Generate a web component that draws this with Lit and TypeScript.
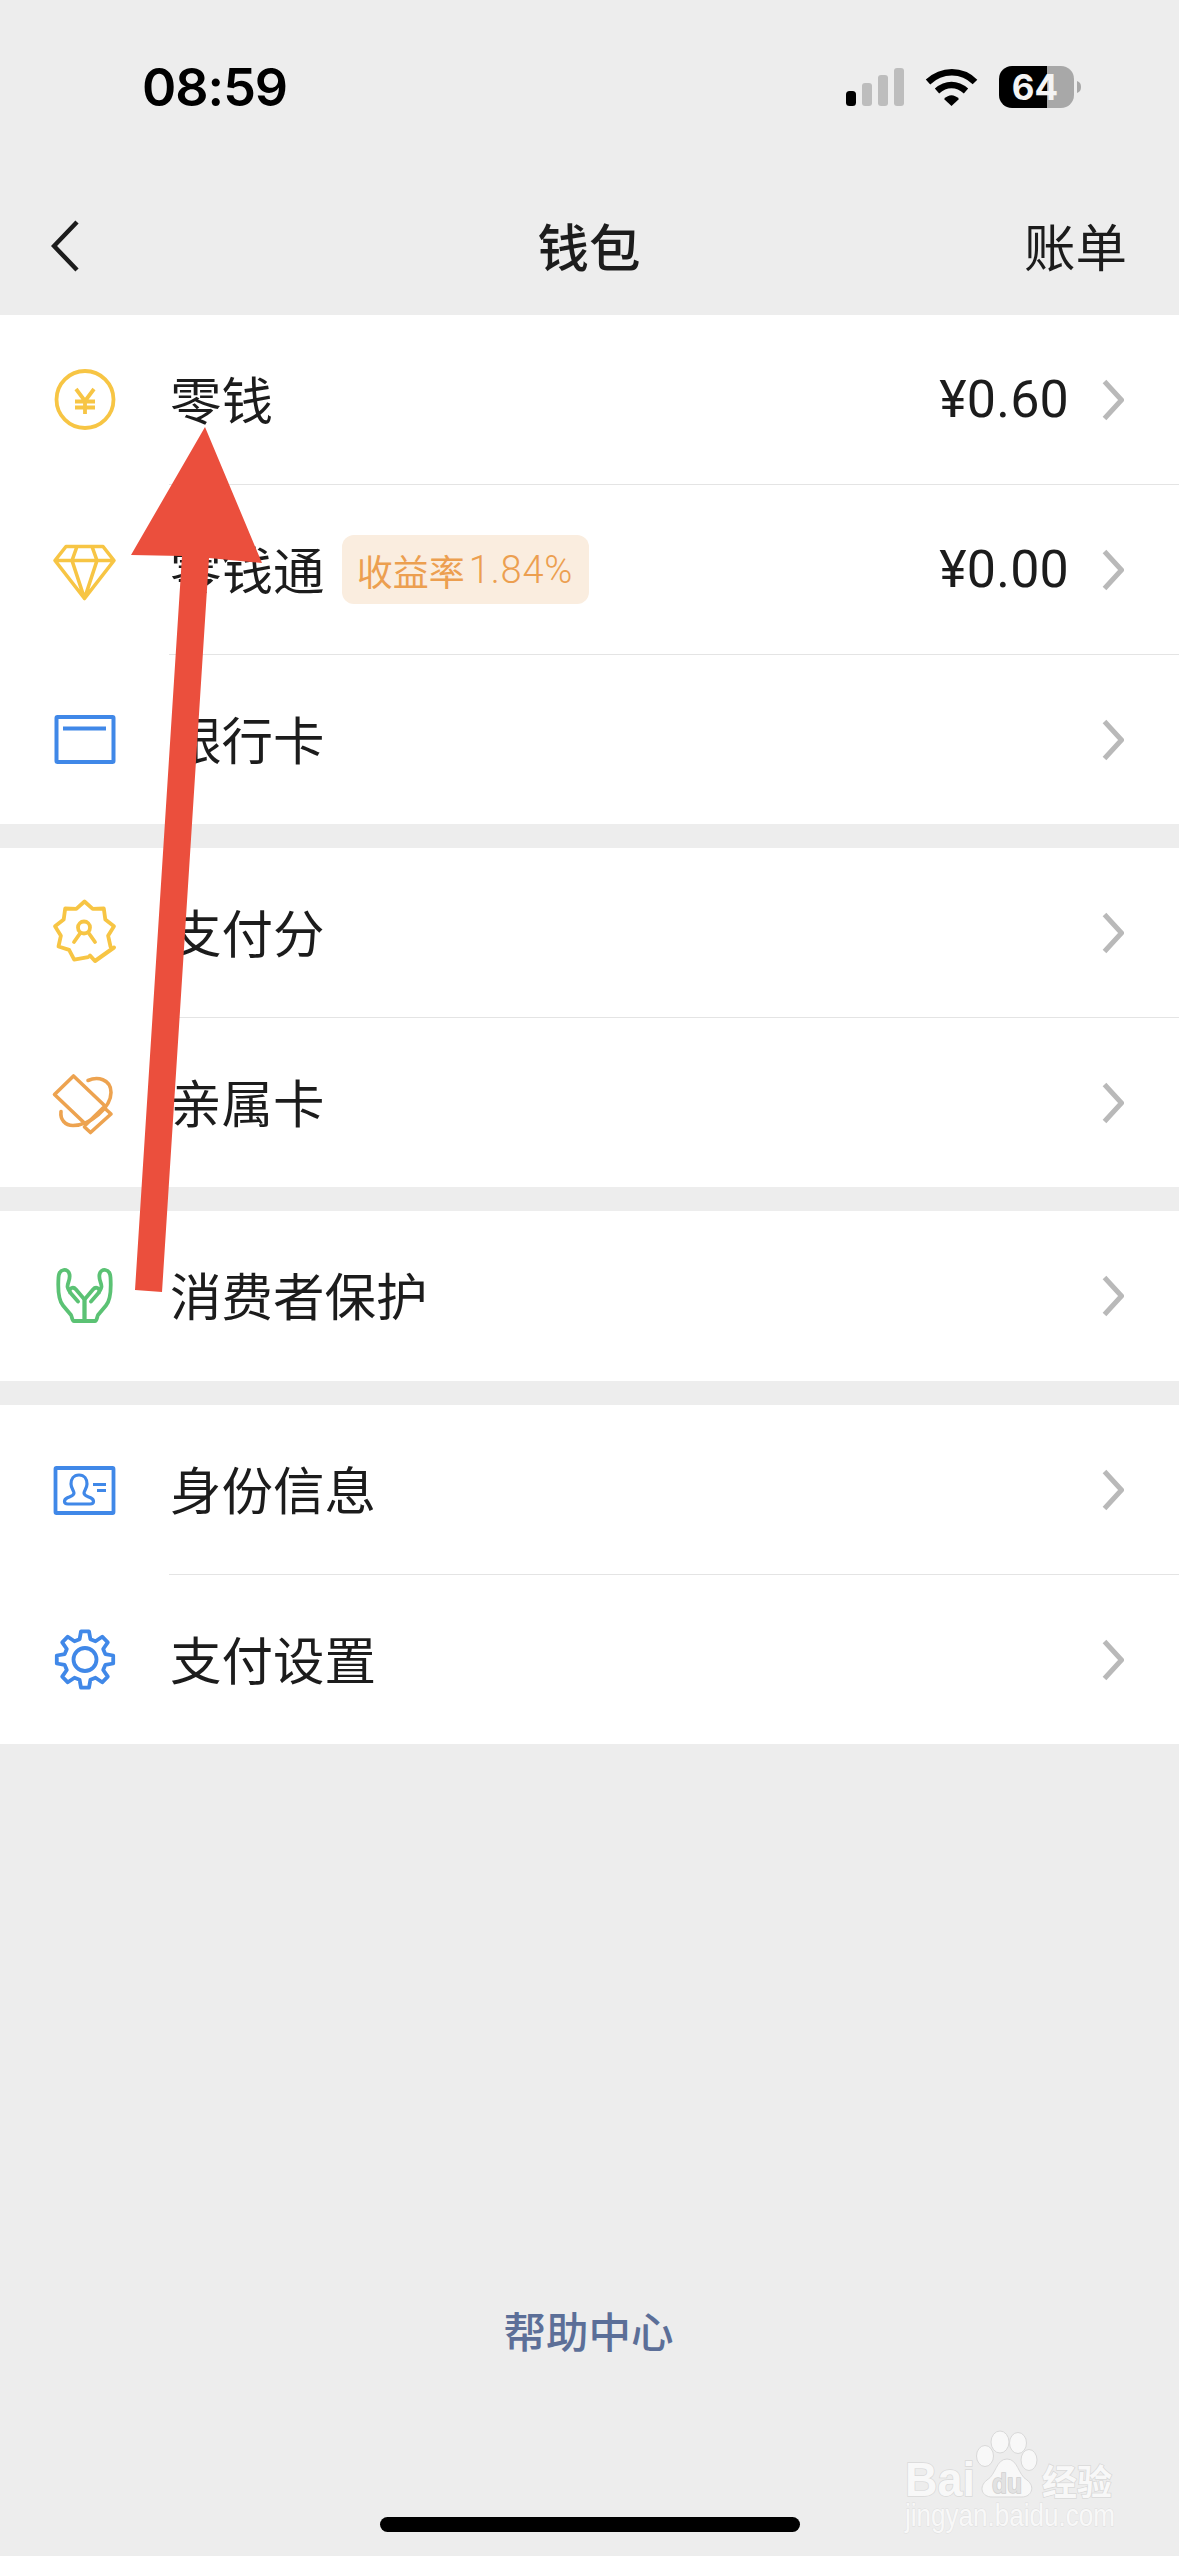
import { LitElement, html, css } from "lit";
import { customElement } from "lit/decorators.js";

function starPath(): string {
  const cx = 39.5, cy = 36, R = 30, r = 24;
  const pts: string[] = [];
  const P = (a: number, rad: number) => {
    const t = (a * Math.PI) / 180;
    return `${(cx + rad * Math.sin(t)).toFixed(1)} ${(cy - rad * Math.cos(t)).toFixed(1)}`;
  };
  pts.push(P(172, 26));
  for (let a = 200; a <= 480; a += 20) {
    const outer = Math.round(a / 20) % 2 === 0;
    pts.push(P(a, outer ? R : r));
  }
  return "M" + pts.join("L");
}

function gearPath(): string {
  const cx = 40, cy = 39.5, Ro = 28.5, Ri = 21;
  const pts: string[] = [];
  const P = (a: number, rad: number) => {
    const t = (a * Math.PI) / 180;
    return `${(cx + rad * Math.sin(t)).toFixed(1)} ${(cy - rad * Math.cos(t)).toFixed(1)}`;
  };
  for (let k = 0; k < 8; k++) {
    const a = k * 45;
    pts.push(P(a - 15, Ri), P(a - 8, Ro), P(a + 8, Ro), P(a + 15, Ri));
  }
  return "M" + pts.join("L") + "Z";
}

const YEL = "#f7c544";
const BLUE = "#4088e8";
const ORG = "#eda350";
const GRN = "#5bc274";

const icons = {
  coin: html`<svg class="ic" viewBox="0 0 80 80" fill="none" stroke=${YEL} stroke-width="3.8"><circle cx="40" cy="39.5" r="28.5"/><path d="M31 29l9 12 9-12M30 41.5h20M30 47.5h20M40 41v13"/></svg>`,
  diamond: html`<svg class="ic" viewBox="0 -5.5 80 80" fill="none" stroke=${YEL} stroke-width="3.600" stroke-linejoin="round"><path d="M21 11h37l11 14-29.500 38L10 25zM10 25h59M32 11l-5 14 12.500 38L52 25l-5-14"/></svg>`,
  bank: html`<svg class="ic" viewBox="0 0 80 80" fill="none" stroke=${BLUE} stroke-width="4"><rect x="11.500" y="17" width="57" height="45" rx="1"/><path d="M18 28.500h43"/></svg>`,
  badge: html`<svg class="ic" viewBox="0 -2.500 80 80" fill="none" stroke=${YEL} stroke-width="3.800" stroke-linejoin="round" stroke-linecap="round"><path d=${starPath()}/><circle cx="39" cy="32" r="6"/><path d="M35 38l-6 8.500M44 38l6 8.500"/><path d="M45 60l5 5.500L69 52" stroke-width="4"/></svg>`,
  family: html`<svg class="ic" viewBox="0 -2.500 80 80" fill="none" stroke=${ORG} stroke-width="3.600" stroke-linejoin="round" stroke-linecap="round"><path d="M28.500 10.500L9.500 29 41 59l19-18.500zM60 43l6 5.500L45.500 67l-6-5.500"/><path d="M43 15C52 11 66 13 66 27 66 42 45 60 28 60 20 60 15 54 16 46"/></svg>`,
  hands: html`<svg class="ic" viewBox="0 0.500 80 80" fill="none" stroke=${GRN} stroke-width="3.800" stroke-linejoin="round" stroke-linecap="round"><path d="M39.500 44V65.500H29C27 65.500 27 61 26 59.500L18 50C13 44 13 30 13.500 22 14 13 23 12 24.500 19 25.500 24 22.500 27 22.500 31 22.500 33 24 35 26 38L33 46M39.500 44L31 34C28 30.500 23.500 33 25 37"/><path d="M39.500 44V65.500H50C52 65.500 52 61 53 59.500L61 50C66 44 66 30 65.500 22 65 13 56 12 54.500 19 53.500 24 56.500 27 56.500 31 56.500 33 55 35 53 38L46 46M39.500 44L48 34C51 30.500 55.500 33 54 37"/></svg>`,
  id: html`<svg class="ic" viewBox="0 0 80 80" fill="none" stroke=${BLUE} stroke-width="3.800" stroke-linejoin="round"><rect x="10.500" y="18" width="58" height="45" rx="1"/><path d="M34 25C28.500 25 26 29.500 26 34 26 38 29 41 29 43 29 46 25 46.500 22 48 19 49.500 18 54 23 54H45C50 54 49 49.500 46 48 43 46.500 39 46 39 43 39 41 42 38 42 34 42 29.500 39.500 25 34 25Z" stroke-width="3.200"/><path d="M48 34.500h13M52 40.500h9" stroke-width="3.200"/></svg>`,
  gear: html`<svg class="ic" viewBox="0 0 80 80" fill="none" stroke=${BLUE} stroke-width="3.800" stroke-linejoin="round"><path d=${gearPath()}/><circle cx="40" cy="39.500" r="11.500"/></svg>`,
};

type Row = { icon: keyof typeof icons; label: string; amount?: string; tag?: string };

const groups: Row[][] = [
  [
    { icon: "coin", label: "零钱", amount: "¥0.60" },
    { icon: "diamond", label: "零钱通", amount: "¥0.00", tag: "收益率 1.84%" },
    { icon: "bank", label: "银行卡" },
  ],
  [
    { icon: "badge", label: "支付分" },
    { icon: "family", label: "亲属卡" },
  ],
  [{ icon: "hands", label: "消费者保护" }],
  [
    { icon: "id", label: "身份信息" },
    { icon: "gear", label: "支付设置" },
  ],
];

@customElement("app-root")
export class AppRoot extends LitElement {
  static styles = css`
    :host {
      display: block;
      width: 1179px;
      height: 2556px;
      position: relative;
      overflow: hidden;
      background: #ededed;
      font-family: "Noto Sans CJK SC", "Noto Sans", sans-serif;
      color: #1c1c1c;
    }
    .page {
      height: 100%;
      display: flex;
      flex-direction: column;
    }
    .status {
      height: 172px;
      box-sizing: border-box;
      padding: 59px 98px 0 142px;
      display: flex;
      justify-content: space-between;
      align-items: flex-start;
      color: #000;
    }
    .time {
      font: 600 52px/58px Inter, "Liberation Sans", sans-serif;
      letter-spacing: -1px;
    }
    .sys {
      display: flex;
      align-items: center;
      margin-top: 7px;
    }
    .batt {
      display: block;
      margin-left: 13px;
    }
    .signal {
      display: block;
    }
    .nav {
      height: 143px;
      box-sizing: border-box;
      padding: 3px 52px 0 51px;
      display: grid;
      grid-template-columns: 1fr auto 1fr;
      align-items: center;
    }
    .back {
      display: block;
      width: 28px;
      height: 52px;
      margin-top: 2px;
    }
    .title {
      font-size: 51.500px;
      line-height: 60px;
      font-weight: 500;
    }
    .bill {
      font-size: 51.500px;
      line-height: 60px;
      justify-self: end;
    }
    .group {
      background: #fff;
      margin-bottom: 24px;
    }
    .group:last-of-type {
      margin-bottom: 0;
    }
    .row {
      height: 169px;
      display: flex;
      align-items: center;
      padding-left: 45px;
      padding-right: 55px;
    }
    .group.single .row {
      height: 170px;
    }
    .ic {
      width: 80px;
      height: 80px;
      flex: none;
    }
    .label {
      margin-left: 45px;
      margin-bottom: 4px;
      font-size: 51.500px;
      line-height: 60px;
    }
    .tag {
      margin-left: 17px;
      width: 247px;
      height: 69px;
      border-radius: 12px;
      background: #faeddf;
      color: #ec9f50;
      font-size: 36px;
      display: flex;
      align-items: center;
      justify-content: center;
      white-space: nowrap;
    }
    .tag b {
      font: 300 38px Roboto, sans-serif;
      letter-spacing: 0.8px;
      margin-left: 4px;
    }
    .amount {
      margin-left: auto;
      font: 400 52px/60px Roboto, sans-serif;
      letter-spacing: 0.2px;
    }
    .chev {
      display: block;
      width: 22px;
      height: 42px;
      margin-left: auto;
      flex: none;
    }
    .amount + .chev {
      margin-left: 33px;
    }
    .sep {
      height: 1px;
      background: #e4e4e4;
      margin-left: 169px;
    }
    .footer {
      margin-top: auto;
      display: flex;
      flex-direction: column;
      align-items: center;
      padding-bottom: 24px;
    }
    .help {
      font-size: 42.500px;
      line-height: 60px;
      color: #5c6f98;
      font-weight: 500;
      margin-bottom: 4px;
      margin-right: 2px;
    }
    .home {
      margin-top: 153px;
      width: 420px;
      height: 15px;
      border-radius: 8px;
      background: #000;
    }
    .arrow {
      position: absolute;
      inset: 0;
      width: 1179px;
      height: 2556px;
      pointer-events: none;
    }
    .wm {
      position: absolute;
      left: 900px;
      top: 2425px;
      width: 225px;
      height: 115px;
    }
    .wm text {
      fill: #f8f8f8;
      stroke: #d9d9d9;
      stroke-width: 1.500px;
      paint-order: stroke;
    }
    .wm .baidu {
      font: 700 48px "Liberation Sans", sans-serif;
    }
    .wm .jy {
      font: 700 35px "Noto Sans CJK SC", sans-serif;
    }
    .wm .url {
      font: 400 32px "Liberation Sans", sans-serif;
      stroke: #dedede;
      stroke-width: 0.800px;
    }
    .wm .du {
      font: 700 27px "Liberation Sans", sans-serif;
      fill: #e2e2e2;
      stroke: #cfcfcf;
    }
  `;

  private statusIcons() {
    return html`
      <svg class="signal" width="140" height="42" viewBox="0 0 140 42">
        <rect x="0" y="25" width="10" height="15" rx="3.500" fill="#000"/>
        <rect x="16" y="17" width="10" height="23" rx="3" fill="#bdbdbd"/>
        <rect x="32" y="9" width="10" height="31" rx="3" fill="#bdbdbd"/>
        <rect x="48" y="2" width="10" height="38" rx="3" fill="#bdbdbd"/>
        <g fill="none" stroke="#000" stroke-width="6.500">
          <path d="M82 16C96 3 116 3 129 16"/>
          <path d="M91 25C100 17 111 17 120 25"/>
        </g>
        <path d="M98 33C103 28 108 28 113 33L105.500 40Z" fill="#000"/>
      </svg>
      <svg class="batt" width="82" height="42" viewBox="0 0 82 42">
        <defs><clipPath id="b"><rect x="0" y="0" width="75" height="42" rx="13"/></clipPath></defs>
        <g clip-path="url(#b)">
          <rect x="0" y="0" width="48" height="42" fill="#000"/>
          <rect x="48" y="0" width="27" height="42" fill="#a8a8a8"/>
        </g>
        <path d="M78 15C81 16 82 18 82 21 82 24 81 26 78 27Z" fill="#a8a8a8"/>
        <text x="36" y="33.500" text-anchor="middle" font-family="Inter, sans-serif" font-weight="700" font-size="35" fill="#f4f4f4">64</text>
      </svg>
    `;
  }

  private renderRow(r: Row) {
    return html`
      <div class="row">
        ${icons[r.icon]}
        <span class="label">${r.label}</span>
        ${r.tag ? html`<span class="tag">收益率<b>1.84%</b></span>` : ""}
        ${r.amount ? html`<span class="amount">${r.amount}</span>` : ""}
        <svg class="chev" viewBox="0 0 22 42" fill="none" stroke="#b9b9b9" stroke-width="5"><path d="M2.500 2.500L19.500 21 2.500 39.500"/></svg>
      </div>
    `;
  }

  render() {
    return html`
      <div class="page">
        <div class="status">
          <span class="time">08:59</span>
          <div class="sys">${this.statusIcons()}</div>
        </div>
        <div class="nav">
          <svg class="back" viewBox="0 0 28 52" fill="none" stroke="#1c1c1c" stroke-width="4.500"><path d="M26 2L3 26l23 24"/></svg>
          <span class="title">钱包</span>
          <span class="bill">账单</span>
        </div>
        ${groups.map(
          (g) => html`
            <div class="group ${g.length === 1 ? "single" : ""}">
              ${g.map(
                (r, i) => html`${i > 0 ? html`<div class="sep"></div>` : ""}${this.renderRow(r)}`
              )}
            </div>
          `
        )}
        <div class="footer">
          <span class="help">帮助中心</span>
          <div class="home"></div>
        </div>
      </div>
      <svg class="wm" viewBox="0 0 225 115">
        <ellipse cx="100" cy="17" rx="9" ry="11" fill="#f8f8f8" stroke="#d9d9d9"/>
        <ellipse cx="118" cy="18" rx="8.500" ry="10.500" fill="#f8f8f8" stroke="#d9d9d9"/>
        <ellipse cx="85" cy="31" rx="8.500" ry="10.500" fill="#f8f8f8" stroke="#d9d9d9"/>
        <ellipse cx="129" cy="35" rx="8" ry="10.500" fill="#f8f8f8" stroke="#d9d9d9"/>
        <path d="M107 34C118 34 118 50 127 55 136 62 131 72 122 72H92C82 72 78 62 87 55 96 50 96 34 107 34Z" fill="#f8f8f8" stroke="#d9d9d9"/>
        <text class="baidu" x="5" y="71" textLength="70" lengthAdjust="spacingAndGlyphs">Bai</text>
        <text class="du" x="92" y="68" textLength="30" lengthAdjust="spacingAndGlyphs">du</text>
        <text class="jy" x="142" y="70">经验</text>
        <text class="url" x="5" y="101" textLength="210" lengthAdjust="spacingAndGlyphs">jingyan.baidu.com</text>
      </svg>
      <svg class="arrow" viewBox="0 0 1179 2556">
        <polygon points="205,427 262,563 209,558 162,1292 135,1290 182,556 131,555" fill="#eb4f3d"/>
      </svg>
    `;
  }
}
